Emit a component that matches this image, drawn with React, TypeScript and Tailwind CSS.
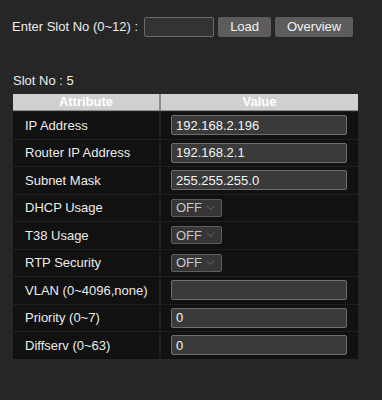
const rows: { label: string; kind: "text" | "select"; value: string }[] = [
  { label: "IP Address", kind: "text", value: "192.168.2.196" },
  { label: "Router IP Address", kind: "text", value: "192.168.2.1" },
  { label: "Subnet Mask", kind: "text", value: "255.255.255.0" },
  { label: "DHCP Usage", kind: "select", value: "OFF" },
  { label: "T38 Usage", kind: "select", value: "OFF" },
  { label: "RTP Security", kind: "select", value: "OFF" },
  { label: "VLAN (0~4096,none)", kind: "text", value: "" },
  { label: "Priority (0~7)", kind: "text", value: "0" },
  { label: "Diffserv (0~63)", kind: "text", value: "0" },
]

function OffSelect({ value }: { value: string }) {
  return (
    <div className="flex h-[18px] w-[51px] items-center justify-between rounded-[2px] border border-[#5e5e5e] bg-[#363636] pl-[4px] pr-[6px] text-[13px] text-[#c8c8c8]">
      <span>{value}</span>
      <svg width="9" height="6" viewBox="0 0 9 6" fill="none">
        <path d="M1 1l3.5 3.5L8 1" stroke="#555" strokeWidth="1.2" />
      </svg>
    </div>
  )
}

export default function App() {
  return (
    <div
      className="h-[400px] w-[382px] bg-[#262626] text-[13px] text-[#ececec]"
      style={{ fontFamily: '"Liberation Sans", Arial, sans-serif' }}
    >
      <div className="flex items-center pl-[12px] pt-[17px]">
        <span className="mr-[6px]">Enter Slot No (0~12) :</span>
        <div className="h-[20px] w-[70px] rounded-[2px] border border-[#6a6a6a] bg-[#333333]" />
        <button className="ml-[4px] h-[20px] w-[53px] rounded-[2px] bg-[#5c5c5c] text-[13px] text-[#f2f2f2]">
          Load
        </button>
        <button className="ml-[4px] h-[20px] w-[78px] rounded-[2px] bg-[#5c5c5c] text-[13px] text-[#f2f2f2]">
          Overview
        </button>
      </div>

      <div className="pl-[13px] pt-[36px] leading-[15px]">Slot No : 5</div>

      <div className="ml-[13px] mt-[6px] w-[345px] bg-[#1f1f1f]">
        <div className="grid grid-cols-[146px_197px] gap-x-[2px] bg-[#8a8a8a]">
          <div className="flex h-[17px] items-center justify-center border-b border-[#8a8a8a] bg-[#d0d0d0] font-bold text-white">
            Attribute
          </div>
          <div className="flex h-[17px] items-center justify-center border-b border-[#8a8a8a] bg-[#d0d0d0] font-bold text-white">
            Value
          </div>
        </div>
        <div className="grid grid-cols-[146px_197px] gap-x-[2px] gap-y-[1px] pt-[1px]">
          {rows.map((r) => (
            <div key={r.label} className="contents">
              <div className="flex h-[26.5px] items-center bg-[#111111] pl-[12px]">{r.label}</div>
              <div className="flex h-[26.5px] items-center bg-[#111111] pl-[10px]">
                {r.kind === "text" ? (
                  <div className="flex h-[20px] w-[176px] items-center rounded-[2px] border border-[#6e6e6e] bg-[#3a3a3a] pl-[4px] text-[#f4f4f4]">
                    {r.value}
                  </div>
                ) : (
                  <OffSelect value={r.value} />
                )}
              </div>
            </div>
          ))}
        </div>
      </div>
    </div>
  )
}
